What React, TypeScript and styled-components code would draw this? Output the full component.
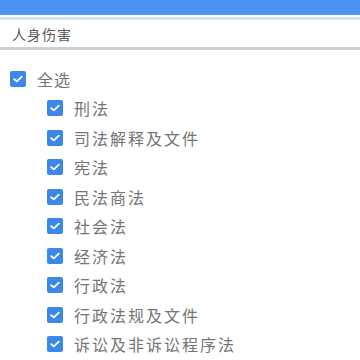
import React from "react";
import styled, { createGlobalStyle } from "styled-components";

const Global = createGlobalStyle`
  html, body { margin: 0; padding: 0; background: #ffffff; }
  body { font-family: "Noto Sans CJK SC", "Noto Sans", sans-serif; width: 360px; height: 360px; overflow: hidden; }
`;

const Page = styled.div`
  width: 360px;
  height: 360px;
  overflow: hidden;
  background: #fff;
  display: flex;
  flex-direction: column;
`;

const TopBar = styled.div`
  height: 14px;
  background: #4a92f4;
  border-bottom: 1px solid #5a9bf0;
`;

const SearchField = styled.div`
  margin-top: 2px;
  height: 26px;
  border-top: 3px solid #d6e2ee;
  border-bottom: 3px solid #c9d1db;
  display: flex;
  align-items: center;
  padding-left: 12px;
  padding-top: 1px;
  font-size: 14px;
  letter-spacing: 1px;
  color: #5a5a5a;
`;

const List = styled.div`
  display: flex;
  flex-direction: column;
  padding-top: 14px;
`;

const Row = styled.label<{ $indent: number }>`
  display: flex;
  align-items: center;
  height: 29.5px;
  padding-left: ${(p) => p.$indent}px;
  gap: 11px;
  font-size: 16px;
  letter-spacing: ${(p) => (p.$indent > 20 ? 2 : 1)}px;
  color: #757575;
`;

const Box = styled.span`
  width: 16px;
  height: 16px;
  border-radius: 2px;
  background: #3b87ea;
  display: flex;
  align-items: center;
  justify-content: center;
  flex: none;
`;

const Check = () => (
  <Box>
    <svg width="10" height="8" viewBox="0 0 10 8">
      <path d="M1.2 4.2 L3.8 6.4 L8.8 1.6" stroke="#fff" strokeWidth="1.8" fill="none" strokeLinecap="round" strokeLinejoin="round" />
    </svg>
  </Box>
);

const items = [
  "刑法",
  "司法解释及文件",
  "宪法",
  "民法商法",
  "社会法",
  "经济法",
  "行政法",
  "行政法规及文件",
  "诉讼及非诉讼程序法",
];

export default function App() {
  return (
    <Page>
      <Global />
      <TopBar />
      <SearchField>人身伤害</SearchField>
      <List>
        <Row $indent={10}>
          <Check />
          全选
        </Row>
        {items.map((t) => (
          <Row key={t} $indent={47}>
            <Check />
            {t}
          </Row>
        ))}
      </List>
    </Page>
  );
}
